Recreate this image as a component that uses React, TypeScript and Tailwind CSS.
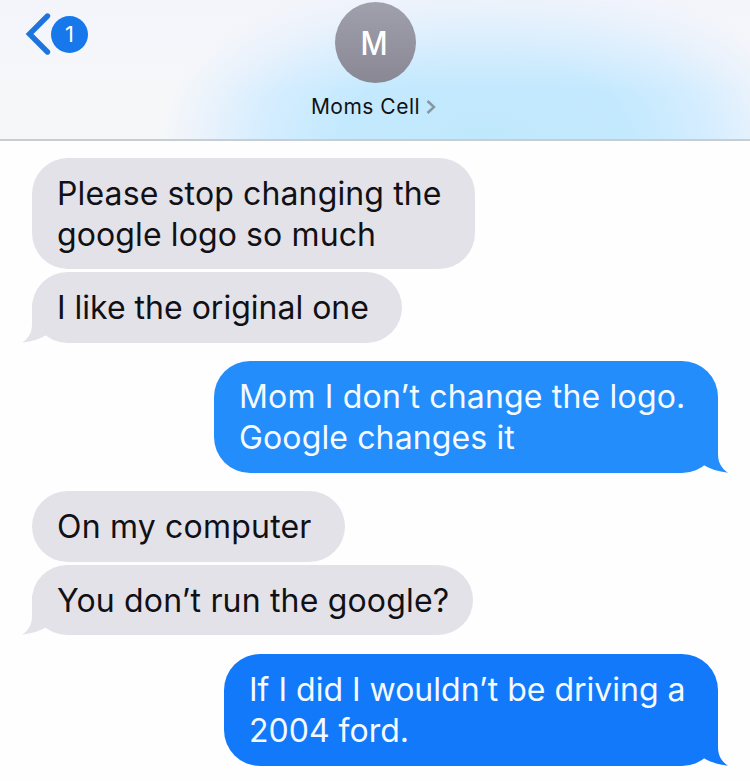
import type { ReactNode } from "react";

type Line = { text: string; tracking: string };

function Tail({ side, color }: { side: "left" | "right"; color: string }) {
  return (
    <svg
      className={
        side === "left"
          ? "absolute bottom-0 -left-[10px] h-[40px] w-[40px]"
          : "absolute bottom-0 -right-[10px] h-[40px] w-[40px] -scale-x-100"
      }
      viewBox="0 0 40 40"
      fill={color}
    >
      <path d="M10 0V21C10 29 7 35 0 39.800C10 38.500 18 36 24 32.300L38 22V0Z" />
    </svg>
  );
}

function Bubble({
  lines,
  className,
  children,
}: {
  lines: Line[];
  className: string;
  children?: ReactNode;
}) {
  return (
    <div className={`relative rounded-[36px] pt-[15px] pl-[25px] text-[32px] leading-[41px] ${className}`}>
      {children}
      {lines.map((line) => (
        <div key={line.text} className={`relative whitespace-nowrap ${line.tracking}`}>
          {line.text}
        </div>
      ))}
    </div>
  );
}

export default function App() {
  return (
    <main className="flex h-[781px] w-[750px] flex-col overflow-hidden bg-[#fefefe] font-['Inter','Liberation_Sans',sans-serif] text-[#111115]">
      <header className="relative h-[141px] shrink-0 border-b-2 border-[#c6ced4] bg-[#f6f7f9] bg-[linear-gradient(to_bottom,#f3f4fbb3_0%,#f3f4fb00_65%),radial-gradient(ellipse_325px_185px_at_485px_140px,#c0e8fd_0%,#c4e9fe_45%,#d4edff_68%,#e8f2fc_85%,#f6f7f9_100%)]">
        <div className="absolute top-[12px] left-[24px] flex items-center">
          <svg className="h-[44px] w-[28px]" viewBox="0 0 28 44" fill="none" stroke="#1d74dc" strokeWidth="5.400" strokeLinecap="round" strokeLinejoin="miter">
            <path d="M23.500 4L5.500 22L23.500 40" />
          </svg>
          <span className="-ml-px flex h-[37px] w-[37px] items-center justify-center rounded-full bg-[#1678ea] text-[22px] text-white">1</span>
        </div>
        <div className="flex flex-col items-center pt-[2px]">
          <div className="flex h-[81px] w-[81px] items-center justify-center rounded-full bg-linear-to-b from-[#a0a1ad] to-[#898793] pt-[2px] pr-px text-[33px] font-medium text-white">
            <span className="scale-x-90">M</span>
          </div>
          <div className="mt-[9px] mr-[3px] flex items-center text-[21px] leading-[30px] tracking-[0.5px]">
            Moms Cell
            <svg className="ml-[6px] h-[16px] w-[10px]" viewBox="0 0 10 16" fill="none" stroke="#8397a5" strokeWidth="2.400">
              <path d="M1.500 2L8 8L1.500 14" />
            </svg>
          </div>
        </div>
      </header>
      <section className="flex flex-col items-start pt-[17px] pr-[32px] pl-[32px]">
        <Bubble
          className="h-[111px] w-[443px] bg-[#e3e2e9]"
          lines={[
            { text: "Please stop changing the", tracking: "tracking-[0.13px]" },
            { text: "google logo so much", tracking: "tracking-[0.11px]" },
          ]}
        />
        <Bubble className="mt-[3px] h-[71px] w-[370px] bg-[#e3e2e9]" lines={[{ text: "I like the original one", tracking: "tracking-[0px]" }]}>
          <Tail side="left" color="#e3e2e9" />
        </Bubble>
        <Bubble
          className="mt-[18px] h-[112px] w-[504px] self-end bg-[#238dfc] text-[#f4faff]"
          lines={[
            { text: "Mom I don’t change the logo.", tracking: "tracking-[0.18px]" },
            { text: "Google changes it", tracking: "tracking-[0.13px]" },
          ]}
        >
          <Tail side="right" color="#238dfc" />
        </Bubble>
        <Bubble className="mt-[18px] h-[71px] w-[313px] bg-[#e3e2e9]" lines={[{ text: "On my computer", tracking: "tracking-[0.2px]" }]} />
        <Bubble className="mt-[3px] h-[70px] w-[441px] bg-[#e3e2e9]" lines={[{ text: "You don’t run the google?", tracking: "tracking-[0.17px]" }]}>
          <Tail side="left" color="#e3e2e9" />
        </Bubble>
        <Bubble
          className="mt-[19px] h-[112px] w-[494px] self-end bg-[#1279fb] text-[#f4faff]"
          lines={[
            { text: "If I did I wouldn’t be driving a", tracking: "tracking-[0px]" },
            { text: "2004 ford.", tracking: "tracking-[0px]" },
          ]}
        >
          <Tail side="right" color="#1279fb" />
        </Bubble>
      </section>
    </main>
  );
}
